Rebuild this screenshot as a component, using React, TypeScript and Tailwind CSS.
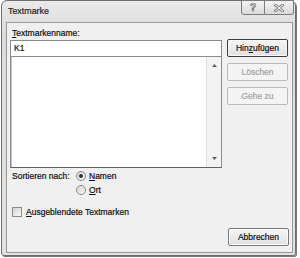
import React from "react";

function Btn({
  children,
  disabled,
  isDefault,
  className = "",
}: {
  children: React.ReactNode;
  disabled?: boolean;
  isDefault?: boolean;
  className?: string;
}) {
  const base =
    "w-[61px] h-[18px] rounded-[2px] flex items-center justify-center border ";
  const look = disabled
    ? "border-[#bababa] bg-[#f4f4f4] text-[#a3a3a3]"
    : isDefault
    ? "border-[#3c3c3c] bg-[linear-gradient(#f6f6f6,#e0e0e0)] text-[#111] shadow-[inset_0_0_0_1px_#f8f8f8]"
    : "border-[#7a7a7a] bg-[linear-gradient(#f6f6f6,#e0e0e0)] text-[#111] shadow-[inset_0_0_0_1px_#fafafa]";
  return <div className={base + look + " " + className}>{children}</div>;
}

function Radio({ checked }: { checked?: boolean }) {
  return (
    <div className="w-[10px] h-[10px] rounded-full border border-[#8a8a8a] bg-[linear-gradient(135deg,#d6d6d6,#f8f8f8)] flex items-center justify-center">
      {checked && <div className="w-[4px] h-[4px] rounded-full bg-[#333]" />}
    </div>
  );
}

export default function App() {
  return (
    <div className="w-[300px] h-[258px] bg-white pl-[1px] font-['Liberation_Sans',Arial,sans-serif] text-[8.5px] leading-none text-[#111] [-webkit-text-stroke:0.2px_currentColor]">
      <div className="w-[295px] h-[256px] flex flex-col border border-[#6e6e6e] rounded-t-[6px] rounded-b-[3px] bg-[linear-gradient(#eaeaea,#dcdcdc_30px,#e2e2e2)] shadow-[1px_1px_0_#7a7a7a]">
        {/* Title bar */}
        <div className="h-[21px] shrink-0 flex items-start justify-between">
          <span className="pl-[6px] pt-[6px] text-[8.9px] text-[#262626]">Textmarke</span>
          <div className="flex mr-[1px] -mt-[1px]">
            <div className="w-[24px] h-[15px] border border-[#7c7c7c] rounded-bl-[3px] bg-[linear-gradient(#f4f4f4,#dadada)] flex items-center justify-center">
              <span className="text-[10px] font-bold text-[#f4f4f4] [-webkit-text-stroke:0.7px_#6a6a6a]">?</span>
            </div>
            <div className="w-[29px] h-[15px] border border-l-0 border-[#7c7c7c] rounded-br-[3px] bg-[linear-gradient(#f4f4f4,#dadada)] flex items-center justify-center">
              <svg width="10" height="8" viewBox="0 0 10 8">
                <path d="M1.5 1 L8.5 7 M8.5 1 L1.5 7" stroke="#6a6a6a" strokeWidth="2.6" strokeLinecap="square" />
                <path d="M1.5 1 L8.5 7 M8.5 1 L1.5 7" stroke="#f2f2f2" strokeWidth="1.1" strokeLinecap="square" />
              </svg>
            </div>
          </div>
        </div>

        {/* Client area */}
        <div className="flex-1 ml-[4px] mr-[2px] mb-[2px] border border-[#9a9a9a] bg-[#f0f0f0] flex flex-col">
          <div className="h-[16px] shrink-0 pl-[5px] pt-[6px]">
            <span className="underline underline-offset-[1px]">T</span>extmarkenname:
          </div>

          <div className="flex pl-[3px]">
            <div className="w-[212px] flex flex-col pt-[1px]">
              <div className="h-[17px] border border-[#8c8c8c] bg-white flex items-center pl-[3px]">K1</div>
              <div className="h-[111px] border border-t-0 border-[#8c8c8c] border-b-[#606060] bg-white flex justify-end shadow-[inset_1px_0_0_#c8c8c8]">
                <div className="w-[15px] h-full border-l border-[#e0e0e0] bg-[#f3f3f3] flex flex-col items-center justify-between py-[7px]">
                  <svg width="5" height="3" viewBox="0 0 5 3">
                    <path d="M0 3 L2.5 0 L5 3 Z" fill="#606060" />
                  </svg>
                  <svg width="5" height="3" viewBox="0 0 5 3">
                    <path d="M0 0 L5 0 L2.5 3 Z" fill="#606060" />
                  </svg>
                </div>
              </div>
            </div>
            <div className="ml-[5px] flex flex-col gap-[6px]">
              <Btn isDefault>
                <span>
                  Hin<span className="underline underline-offset-[1px]">z</span>ufügen
                </span>
              </Btn>
              <Btn disabled>Löschen</Btn>
              <Btn disabled>Gehe zu</Btn>
            </div>
          </div>

          <div className="flex mt-[3px] pl-[5px]">
            <div className="w-[64px] h-[10px] flex items-center">Sortieren nach:</div>
            <div className="flex flex-col gap-[4px]">
              <div className="h-[10px] flex items-center gap-[3px]">
                <Radio checked />
                <span>
                  <span className="underline underline-offset-[1px]">N</span>amen
                </span>
              </div>
              <div className="h-[10px] flex items-center gap-[3px]">
                <Radio />
                <span>
                  <span className="underline underline-offset-[1px]">O</span>rt
                </span>
              </div>
            </div>
          </div>

          <div className="flex items-center gap-[4px] mt-[12px] pl-[5px] h-[10px]">
            <div className="w-[10px] h-[10px] border border-[#8a8a8a] bg-[linear-gradient(135deg,#d4d4d4,#f8f8f8)]" />
            <span>
              <span className="underline underline-offset-[1px]">A</span>usgeblendete Textmarken
            </span>
          </div>

          <div className="mt-auto mb-[6px] self-end mr-[3px]">
            <Btn>Abbrechen</Btn>
          </div>
        </div>
      </div>
    </div>
  );
}
